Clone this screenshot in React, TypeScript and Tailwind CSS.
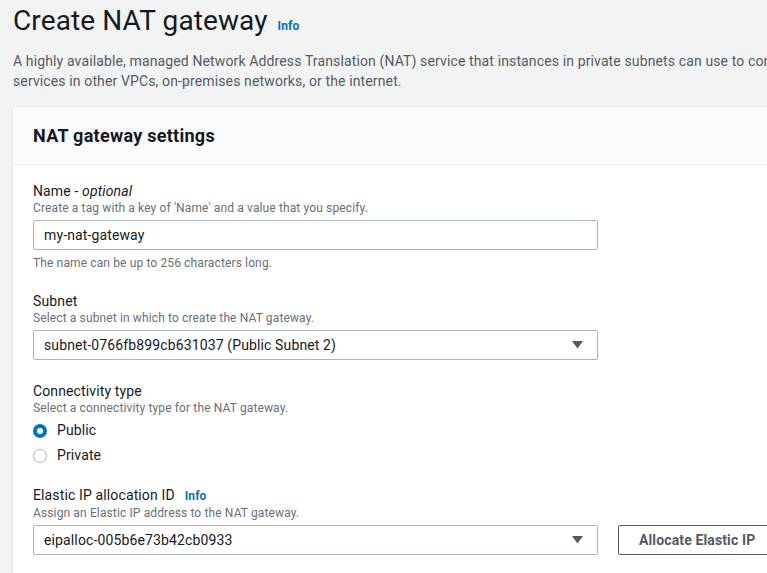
import React from "react";

const font = { fontFamily: "Roboto, 'Noto Sans', Arial, sans-serif" };

function Caret() {
    return (
        <svg width="11" height="8" viewBox="0 0 11 8" className="shrink-0">
            <path d="M0 0 H11 L5.5 7.5 Z" fill="#545b64" />
        </svg>
    );
}

function Field({ label, info, desc, children }: { label: React.ReactNode; info?: boolean; desc: string; children: React.ReactNode }) {
    return (
        <div className="flex flex-col">
            <div className="flex items-baseline gap-[10px] text-[14px] leading-[20px] text-[#16191f]">
                <span>{label}</span>
                {info && <span className="text-[12px] font-bold text-[#0073bb]">Info</span>}
            </div>
            <div className="-mt-[1px] text-[12px] leading-[16px] text-[#687078]">{desc}</div>
            <div className="mt-[4px]">{children}</div>
        </div>
    );
}

function Select({ value }: { value: string }) {
    return (
        <div className="flex h-[30px] w-[565px] items-center justify-between rounded-[2px] border border-[#aab7b8] bg-white pl-[10px] pr-[14px] text-[14px] text-[#16191f]">
            <span>{value}</span>
            <Caret />
        </div>
    );
}

function Radio({ label, checked }: { label: string; checked?: boolean }) {
    return (
        <div className="flex h-[25px] items-center gap-[10px] text-[14px] text-[#16191f]">
            {checked ? (
                <span className="flex h-[14px] w-[14px] items-center justify-center rounded-full bg-[#0073bb]">
                    <span className="h-[6px] w-[6px] rounded-full bg-white" />
                </span>
            ) : (
                <span className="h-[14px] w-[14px] rounded-full border border-[#aab7b8] bg-white" />
            )}
            <span>{label}</span>
        </div>
    );
}

export default function App() {
    return (
        <div className="h-[573px] w-full overflow-hidden bg-[#f2f3f3] pl-[13px] tracking-[0.008em]" style={font}>
            {/* Page header */}
            <div className="flex items-baseline gap-[10px] pt-[1px]">
                <h1 className="text-[28px] leading-[40px] tracking-[0.004em] text-[#16191f]">Create NAT gateway</h1>
                <span className="text-[12px] font-bold text-[#0073bb]">Info</span>
            </div>
            <p className="mt-[10px] whitespace-nowrap text-[14px] leading-[20px] text-[#545b64]">
                A highly available, managed Network Address Translation (NAT) service that instances in private subnets can use to connect to
                <br />
                services in other VPCs, on-premises networks, or the internet.
            </p>

            {/* Settings card */}
            <div className="mt-[15px] -ml-[1px] w-[900px] border border-[#eaeded] bg-white shadow-[0_1px_1px_0_rgba(0,28,36,0.2)]">
                <div className="flex h-[58px] items-center border-b border-[#eaeded] bg-[#fafafa] px-[20px]">
                    <h2 className="text-[18px] font-bold tracking-[0.015em] text-[#16191f]">NAT gateway settings</h2>
                </div>

                <div className="flex flex-col gap-[20px] px-[20px] pt-[16px] pb-[20px]">
                    <Field label={<>Name - <i>optional</i></>} desc="Create a tag with a key of 'Name' and a value that you specify.">
                        <div className="flex h-[30px] w-[565px] items-center rounded-[2px] border border-[#aab7b8] bg-white px-[10px] text-[14px] text-[#16191f]">
                            my-nat-gateway
                        </div>
                        <div className="mt-[5px] text-[12px] leading-[16px] text-[#687078]">The name can be up to 256 characters long.</div>
                    </Field>

                    <Field label="Subnet" desc="Select a subnet in which to create the NAT gateway.">
                        <Select value="subnet-0766fb899cb631037 (Public Subnet 2)" />
                    </Field>

                    <div className="mt-[1px] -mb-[3px]">
                        <Field label="Connectivity type" desc="Select a connectivity type for the NAT gateway.">
                            <div className="-mt-[2px] flex flex-col">
                                <Radio label="Public" checked />
                                <Radio label="Private" />
                            </div>
                        </Field>
                    </div>

                    <Field label="Elastic IP allocation ID" info desc="Assign an Elastic IP address to the NAT gateway.">
                        <div className="flex items-center gap-[20px]">
                            <Select value="eipalloc-005b6e73b42cb0933" />
                            <button className="h-[30px] rounded-[2px] border border-[#545b64] bg-white px-[20px] text-[14px] font-bold text-[#545b64]">
                                Allocate Elastic IP
                            </button>
                        </div>
                    </Field>
                </div>
            </div>
        </div>
    );
}
